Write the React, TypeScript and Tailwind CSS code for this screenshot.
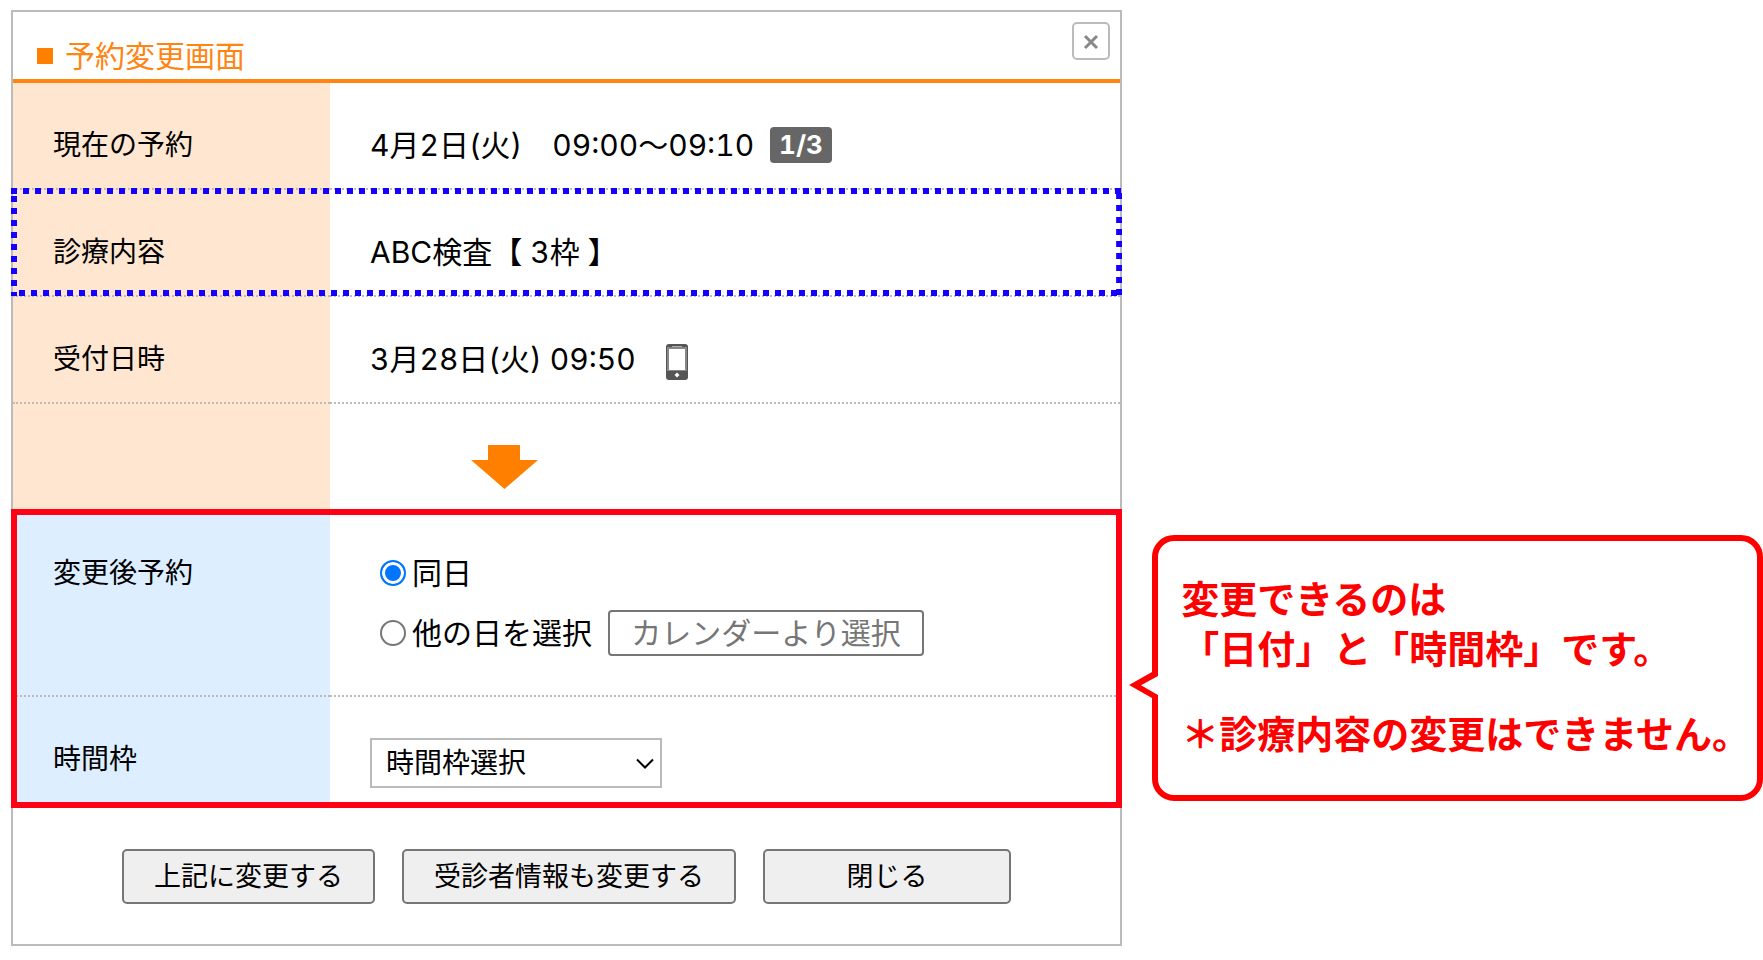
import { useState } from "react";
import type { ReactNode } from "react";

interface RowProps {
  label: ReactNode;
  tone?: "current" | "next";
  children?: ReactNode;
}

function Row({ label, tone = "current", children }: RowProps) {
  const bg = tone === "current" ? "bg-[#ffe6d0]" : "bg-[#dceeff]";
  return (
    <div className="flex">
      <dt className={`w-[317px] shrink-0 border-b-2 border-dotted border-[#bbb] pl-10 pt-[41px] pb-[22px] text-[28px] leading-[42px] ${bg}`}>
        {label}
      </dt>
      <dd className="flex-1 border-b-2 border-dotted border-[#bbb] pl-10 pt-[41px] pb-[22px] text-[30px] leading-[42px]">
        {children}
      </dd>
    </div>
  );
}

function PhoneIcon() {
  return (
    <svg width="22" height="36" viewBox="0 0 22 36" role="img" aria-label="スマートフォン">
      <rect width="22" height="36" rx="3" fill="#555" />
      <rect x="1" y="3" width="20" height="24" fill="#888" />
      <rect x="3" y="5" width="16" height="21" fill="#fff" />
      <rect x="6" y="2" width="10" height="1" fill="#aaa" />
      <path d="M11 28.500l2.500 2.500-2.500 2.500-2.500-2.500z" fill="#fff" />
    </svg>
  );
}

function DottedFrame() {
  return (
    <svg
      className="pointer-events-none absolute -top-0.5 -left-0.5 h-[108px] w-[calc(100%+4px)]"
      stroke="#1400ff"
      strokeWidth="6"
      strokeDasharray="6 6"
      aria-hidden="true"
    >
      <line x1="0" y1="3" x2="100%" y2="3" />
      <line x1="3" y1="8" x2="3" y2="108" />
      <line x1="8" y1="105" x2="100%" y2="105" />
      {/* nested svg anchors the right side to the frame's edge */}
      <svg x="100%" className="overflow-visible">
        <line x1="-3" y1="5" x2="-3" y2="108" />
      </svg>
    </svg>
  );
}

const radioClass =
  "size-[26px] shrink-0 appearance-none rounded-full border-2 border-[#767676] bg-white checked:border-[#0075ff] checked:bg-[#0075ff] checked:shadow-[inset_0_0_0_3px_#fff]";

const buttonClass =
  "h-[55px] rounded-[5px] border-2 border-[#767676] bg-[#efefef] px-[30px] text-[27px] leading-none whitespace-nowrap";

export default function App() {
  const [day, setDay] = useState("same");
  const [date, setDate] = useState("");

  return (
    <main className="flex items-start gap-[30px] bg-white pt-[10px] pl-[11px] font-['Inter','Noto_Sans_CJK_JP',sans-serif] text-black tabular-nums">
      <section className="min-w-0 flex-1 border-2 border-[#bbb]">
        <header className="flex h-[71px] items-start justify-between border-b-4 border-[#ff8412] pt-[10px] pr-[10px] pl-6">
          <h1 className="flex items-center gap-3 pt-3 text-[30px] leading-[44px] text-[#ff8412]">
            <span className="size-4 bg-[#ff8000]" />
            予約変更画面
          </h1>
          <button type="button" aria-label="閉じる" className="flex size-[38px] items-center justify-center rounded-[5px] border-2 border-[#bbb] pt-0.5">
            <svg width="16" height="16" viewBox="0 0 16 16" fill="none" stroke="#888" strokeWidth="3">
              <path d="M2 2l12 12M14 2L2 14" />
            </svg>
          </button>
        </header>

        <dl>
          <Row label="現在の予約">
            <div className="flex items-center gap-4">
              <span>4月2日(火)　09:00〜09:10</span>
              <span className="rounded-[4px] bg-[#666] px-[9px] text-[26px] leading-9 font-bold text-white">1/3</span>
            </div>
          </Row>
          <div className="relative">
            <Row label="診療内容">ABC検査【 3枠 】</Row>
            <DottedFrame />
          </div>
          <Row label="受付日時">
            <div className="flex items-end gap-[30px]">
              3月28日(火) 09:50
              <PhoneIcon />
            </div>
          </Row>
          <Row label={"\u00a0"}>
            <div className="h-[42px] pl-[101px]">
              <svg width="67" height="44" viewBox="0 0 67 44" aria-hidden="true">
                <path d="M17 0h32v15h18L33.500 44 0 15h17z" fill="#ff8000" />
              </svg>
            </div>
          </Row>

          {/* editable fields */}
          <div className="relative">
            <Row tone="next" label="変更後予約">
              <div className="flex flex-col gap-[18px] pb-[19px] pl-[10px]">
                <label className="flex items-center gap-[6px]">
                  <input type="radio" name="day" className={radioClass} checked={day === "same"} onChange={() => setDay("same")} />
                  同日
                </label>
                <div className="flex h-[42px] items-center">
                  <label className="flex items-center gap-[6px]">
                    <input type="radio" name="day" className={radioClass} checked={day === "other"} onChange={() => setDay("other")} />
                    他の日を選択
                  </label>
                  <input
                    type="text"
                    aria-label="他の日"
                    placeholder="カレンダーより選択"
                    value={date}
                    onChange={(e) => setDate(e.target.value)}
                    className="ml-4 h-[46px] w-[316px] rounded-[4px] border-2 border-[#767676] text-center placeholder:text-[#767676]"
                  />
                </div>
              </div>
            </Row>
            <Row tone="next" label={<label htmlFor="slot">時間枠</label>}>
              <div className="relative h-[42px] w-[292px]">
                <select id="slot" className="h-[50px] w-full appearance-none border-2 border-[#bbb] bg-white pl-[14px] text-[28px]">
                  <option>時間枠選択</option>
                </select>
                <svg className="pointer-events-none absolute top-5 right-2" width="18" height="12" viewBox="0 0 18 12" fill="none" stroke="#000" strokeWidth="2">
                  <path d="M1 1.500l8 8 8-8" />
                </svg>
              </div>
            </Row>
            <div className="pointer-events-none absolute -inset-x-0.5 -top-0.5 -bottom-1 border-6 border-[#ff0014]" />
          </div>
        </dl>

        <div className="flex justify-center gap-[27px] pt-[45px] pb-10">
          <button type="button" className={buttonClass}>上記に変更する</button>
          <button type="button" className={buttonClass}>受診者情報も変更する</button>
          <button type="button" className={`${buttonClass} w-[248px]`}>閉じる</button>
        </div>
      </section>

      <aside className="relative mt-[525px] shrink-0 rounded-[22px] border-6 border-[#f00] pt-[33px] pr-[7px] pb-9 pl-[23px] text-[38px] leading-[50px] font-bold whitespace-nowrap text-[#f00]">
        <svg className="absolute top-[129px] -left-[29px]" width="29" height="30" viewBox="0 0 29 30" aria-hidden="true">
          <path d="M23 2h6v26h-6z" fill="#fff" />
          <path d="M23 2L0 15l23 13h6v-3L12 15.300 29 6V2z" fill="#f00" />
        </svg>
        <p>変更できるのは</p>
        <p>「日付」と「時間枠」です。</p>
        <p className="mt-[35px]">＊診療内容の変更はできません。</p>
      </aside>
    </main>
  );
}
